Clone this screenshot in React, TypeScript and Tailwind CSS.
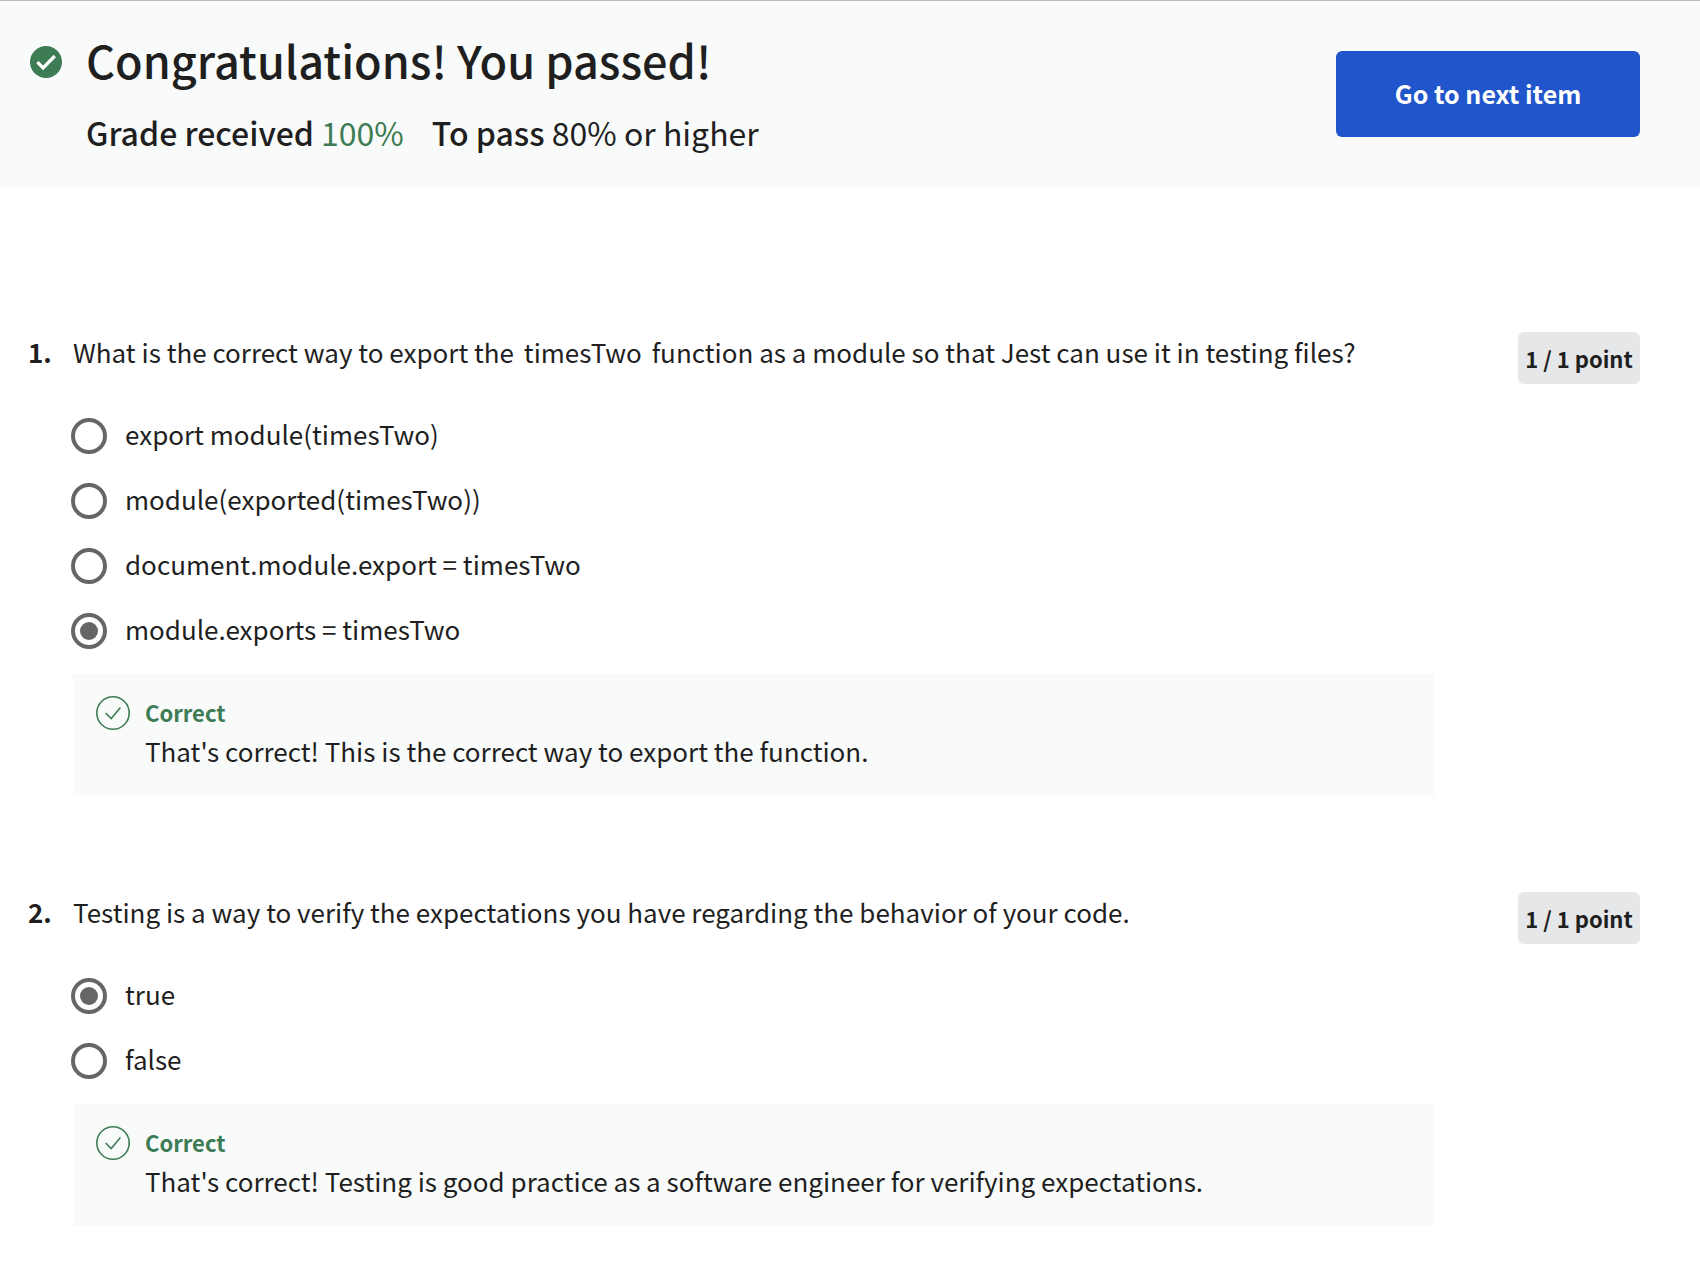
import React from "react";

type Option = { label: string; checked?: boolean };
type Question = { id: number; prompt: React.ReactNode; options: Option[]; feedback: string };

const questions: Question[] = [
  {
    id: 1,
    prompt: (
      <>
        What is the correct way to export the <span className="px-1">timesTwo</span> function as a module so that Jest can use it in
        testing files?
      </>
    ),
    options: [
      { label: "export module(timesTwo)" },
      { label: "module(exported(timesTwo))" },
      { label: "document.module.export = timesTwo" },
      { label: "module.exports = timesTwo", checked: true },
    ],
    feedback: "That's correct! This is the correct way to export the function.",
  },
  {
    id: 2,
    prompt: "Testing is a way to verify the expectations you have regarding the behavior of your code.",
    options: [{ label: "true", checked: true }, { label: "false" }],
    feedback: "That's correct! Testing is good practice as a software engineer for verifying expectations.",
  },
];

function PassedIcon() {
  return (
    <svg className="size-8 shrink-0" viewBox="0 0 32 32" fill="none" aria-hidden="true">
      <circle cx="16" cy="16" r="16" fill="#3d7c55" />
      <path d="M7.4 16.2l5.7 5.8L24.8 10" stroke="#fff" strokeWidth="3.3" />
    </svg>
  );
}

function CorrectIcon() {
  return (
    <svg className="size-[34px] shrink-0" viewBox="0 0 34 34" fill="none" stroke="#3d7c55" aria-hidden="true">
      <circle cx="17" cy="17" r="16.2" strokeWidth="1.6" />
      <path d="M9.7 17l5.5 5.5 9.2-11" strokeWidth="1.6" />
    </svg>
  );
}

function QuestionBlock({ q }: { q: Question }) {
  return (
    <section className="flex items-start">
      <div className="w-[45px] shrink-0 text-[26px] leading-10 font-bold">{q.id}.</div>
      <div className="mr-21 flex-1">
        <h2 id={`q${q.id}`} className="text-[26px] leading-10">
          {q.prompt}
        </h2>
        <div role="radiogroup" aria-labelledby={`q${q.id}`} className="mt-[31px] flex flex-col">
          {q.options.map((o) => (
            <label key={o.label} className="flex h-[65px] items-center gap-[18px] text-[26px]">
              <input
                type="radio"
                name={`question-${q.id}`}
                defaultChecked={o.checked}
                className="-ml-0.5 size-9 shrink-0 appearance-none rounded-full border-4 border-[#666666] bg-white p-[5px] checked:bg-[#666666] checked:bg-clip-content"
              />
              <span className="pb-1">{o.label}</span>
            </label>
          ))}
        </div>
        <div className="mt-[11px] flex gap-[15px] bg-[#f9fbfa] px-[23px] py-[22px]">
          <CorrectIcon />
          <div>
            <p className="text-[22px] leading-8 font-bold text-[#3d7c55]">Correct</p>
            <p className="text-[26px] leading-[46px]">{q.feedback}</p>
          </div>
        </div>
      </div>
      <div className="w-[122px] shrink-0 rounded-md bg-[#e5e7e8] text-center text-[22px] leading-[52px] font-bold">1 / 1 point</div>
    </section>
  );
}

export default function App() {
  return (
    <main className="min-h-screen bg-white font-['Noto_Sans_CJK_SC',sans-serif] text-[#1f1f1f]">
      <header className="flex items-center justify-between border-t border-[#b9bbbb] bg-[#f9fbfa] pt-[31px] pr-15 pb-8 pl-[30px]">
        <div className="flex items-start gap-6">
          <div className="flex h-15 items-center">
            <PassedIcon />
          </div>
          <div>
            <h1 className="text-[45px] leading-14 font-medium">Congratulations! You passed!</h1>
            <p className="mt-5 flex gap-7 text-[32px] leading-12">
              <span>
                <span className="font-medium">Grade received</span> <span className="text-[#3d7c55]">100%</span>
              </span>
              <span>
                <span className="font-medium">To pass</span> 80% or higher
              </span>
            </p>
          </div>
        </div>
        <button className="h-[86px] w-[304px] rounded-md bg-[#2155cb] text-[25px] font-bold text-white">Go to next item</button>
      </header>
      <div className="flex flex-col gap-24 pt-36 pr-15 pl-7">
        {questions.map((q) => (
          <QuestionBlock key={q.id} q={q} />
        ))}
      </div>
    </main>
  );
}
